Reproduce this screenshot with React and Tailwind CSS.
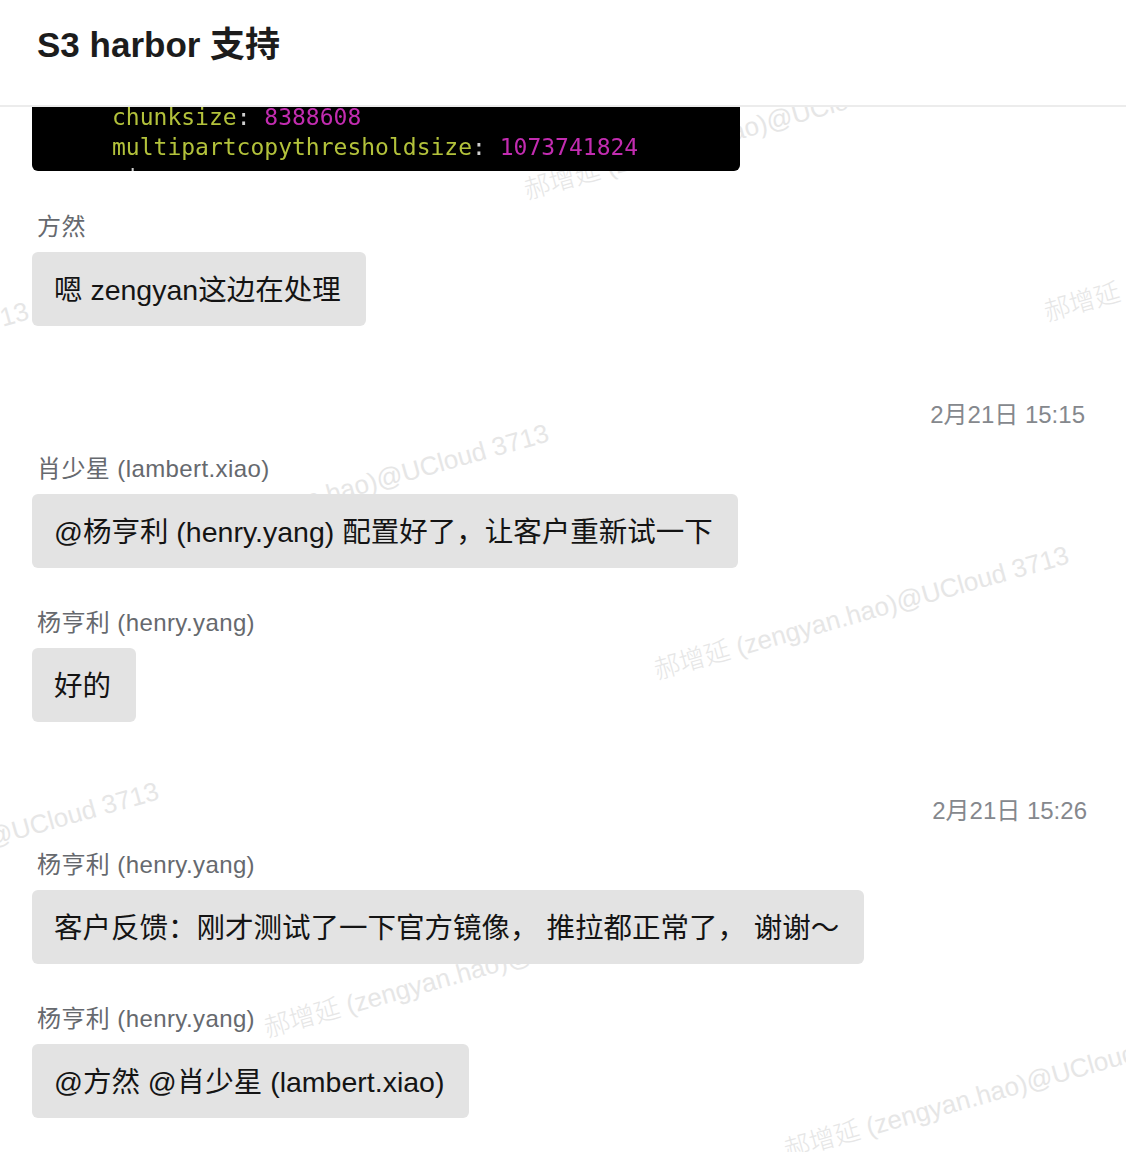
const WATERMARK = '郝增延 (zengyan.hao)@UCloud 3713'

function Watermark({ className }) {
  return (
    <div
      className={`pointer-events-none absolute origin-bottom-left -rotate-[15.7deg] whitespace-nowrap text-[26px] leading-none font-light text-[#e6e6e6] select-none ${className}`}
    >
      {WATERMARK}
    </div>
  )
}

function Message({ name, children, className = '' }) {
  return (
    <div className={`flex flex-col items-start gap-[12px] ${className}`}>
      <div className="ml-[5px] h-[30px] pt-[2px] text-[24px] leading-[30px] tracking-[0.4px] text-[#66696e]">
        {name}
      </div>
      <div className="flex h-[74px] items-center rounded-[6px] bg-[#e3e3e3] pl-[22px] pr-[25px] pt-[3px] text-[28.5px] text-[#141414]">
        {children}
      </div>
    </div>
  )
}

function Stamp({ children, className = '' }) {
  return (
    <div className={`flex h-[30px] justify-end text-[24px] leading-[30px] text-[#85888d] ${className}`}>
      {children}
    </div>
  )
}

export default function App() {
  return (
    <div className="relative h-[1152px] w-full overflow-hidden bg-white font-['Liberation_Sans','Noto_Sans_CJK_SC',sans-serif]">
      <header className="relative z-20 flex h-[107px] items-start border-b-2 border-[#ececec] bg-white pl-[37px] pt-[24px]">
        <h1 className="text-[35px] font-bold leading-[42px] text-[#1c1c1c]">S3 harbor 支持</h1>
      </header>

      <Watermark className="left-[528px] top-[177px]" />
      <Watermark className="left-[1048px] top-[299px]" />
      <Watermark className="left-[-382px] top-[413px]" />
      <Watermark className="left-[138px] top-[535px]" />
      <Watermark className="left-[658px] top-[657px]" />
      <Watermark className="left-[-252px] top-[893px]" />
      <Watermark className="left-[268px] top-[1015px]" />
      <Watermark className="left-[788px] top-[1137px]" />

      <main className="relative z-10 flex flex-col pl-[32px] pr-[41px]">
        <div className="h-[64px] w-[708px] overflow-hidden rounded-b-[6px] bg-black pl-[80px] font-['DejaVu_Sans_Mono',monospace] text-[23px] leading-[30px] blur-[0.3px]">
          <div className="-mt-[5px] whitespace-pre">
            <span className="text-[#b3c23b]">chunksize</span>
            <span className="text-[#cfcfcf]">: </span>
            <span className="text-[#c22cb0]">8388608</span>
          </div>
          <div className="whitespace-pre">
            <span className="text-[#b3c23b]">multipartcopythresholdsize</span>
            <span className="text-[#cfcfcf]">: </span>
            <span className="text-[#c22cb0]">1073741824</span>
          </div>
          <div className="whitespace-pre text-[#cfcfcf]"> '</div>
        </div>

        <Message name="方然" className="mt-[39px]">
          嗯 zengyan这边在处理
        </Message>

        <Stamp className="mt-[74px]">2月21日 15:15</Stamp>

        <Message name="肖少星 (lambert.xiao)" className="mt-[22px]">
          @杨亨利 (henry.yang) 配置好了，让客户重新试一下
        </Message>

        <Message name="杨亨利 (henry.yang)" className="mt-[38px]">
          好的
        </Message>

        <Stamp className="mt-[74px] mr-[-2px]">2月21日 15:26</Stamp>

        <Message name="杨亨利 (henry.yang)" className="mt-[22px]">
          客户反馈：刚才测试了一下官方镜像， 推拉都正常了， 谢谢～
        </Message>

        <Message name="杨亨利 (henry.yang)" className="mt-[38px]">
          @方然 @肖少星 (lambert.xiao)
        </Message>
      </main>
    </div>
  )
}
